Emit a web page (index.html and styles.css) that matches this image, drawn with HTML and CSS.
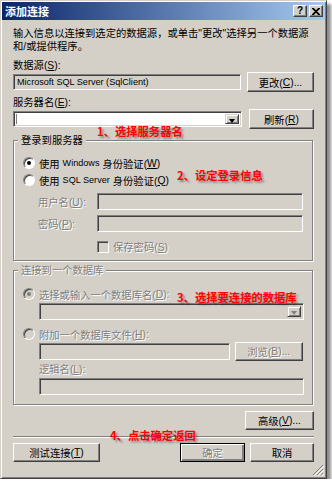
FILE: index.html
```html
<!DOCTYPE html>
<html lang="zh-CN">
<head>
    <meta charset="UTF-8">
    <title>添加连接</title>
    <link rel="stylesheet" href="styles.css">
</head>
<body>
<div class="window">
    <div class="titlebar">
        <span class="title">添加连接</span>
        <div class="caption-btns">
            <span class="cbtn help">?</span>
            <span class="cbtn close">
                <svg width="8" height="7" viewBox="0 0 8 7"><path d="M0 0L7 7M1 0L8 7M7 0L0 7M8 0L1 7" stroke="#000" stroke-width="1.1"/></svg>
            </span>
        </div>
    </div>
    <div class="content">
        <p class="intro">输入信息以连接到选定的数据源，或单击"更改"选择另一个数据源和/或提供程序。</p>
        <div class="label first">数据源(<u>S</u>):</div>
        <div class="row">
            <div class="field readonly src"><span class="en">Microsoft SQL Server (SqlClient)</span></div>
            <div class="btn change">更改(<u>C</u>)...</div>
        </div>
        <div class="label">服务器名(<u>E</u>):</div>
        <div class="row">
            <div class="field combo server"><span class="cursor"></span><span class="drop"></span></div>
            <div class="btn refresh">刷新(<u>R</u>)</div>
        </div>

        <div class="group login">
            <span class="legend">登录到服务器</span>
            <div class="radio-row">
                <span class="radio checked"></span>使用 <span class="en">Windows</span> 身份验证(<u>W</u>)
            </div>
            <div class="radio-row second">
                <span class="radio"></span>使用 <span class="en">SQL Server</span> 身份验证(<u>Q</u>)
            </div>
            <div class="field-row user">
                <span class="row-label disabled">用户名(<u>U</u>):</span>
                <div class="field disabled-box login-box"></div>
            </div>
            <div class="field-row pw">
                <span class="row-label disabled">密码(<u>P</u>):</span>
                <div class="field disabled-box login-box"></div>
            </div>
            <div class="check-row">
                <span class="checkbox"></span><span class="disabled">保存密码(<u>S</u>)</span>
            </div>
        </div>

        <div class="group database">
            <span class="legend disabled">连接到一个数据库</span>
            <div class="radio-row disabled">
                <span class="radio checked off"></span>选择或输入一个数据库名(<u>D</u>):
            </div>
            <div class="field combo disabled-box dbname"><span class="drop off"></span></div>
            <div class="radio-row disabled attach">
                <span class="radio off"></span>附加一个数据库文件(<u>H</u>):
            </div>
            <div class="file-row">
                <div class="field disabled-box file"></div>
                <div class="btn browse disabled">浏览(<u>B</u>)...</div>
            </div>
            <div class="sub-label disabled">逻辑名(<u>L</u>):</div>
            <div class="field disabled-box logical"></div>
        </div>

        <div class="adv-row">
            <div class="btn advanced">高级(<u>V</u>)...</div>
        </div>
        <div class="separator"></div>
        <div class="bottom-row">
            <div class="btn test">测试连接(<u>T</u>)</div>
            <div class="btn default disabled ok">确定</div>
            <div class="btn cancel">取消</div>
        </div>
    </div>

    <svg class="grip" width="12" height="12" viewBox="0 0 12 12">
        <path d="M11 1L1 11M11 5L5 11M11 9L9 11" stroke="#808080" stroke-width="1"/>
        <path d="M12 2L2 12M12 6L6 12M12 10L10 12" stroke="#fff" stroke-width="1"/>
    </svg>

    <span class="note n1">1、选择服务器名</span>
    <span class="note n2">2、设定登录信息</span>
    <span class="note n3">3、选择要连接的数据库</span>
    <span class="note n4">4、点击确定返回</span>
</div>
</body>
</html>
```

FILE: styles.css
```css
html,body{
    margin:0;
    padding:0;
    background:#fff;
}
body{
    font-family:"Liberation Sans","Noto Sans CJK SC",sans-serif;
    font-size:10.3px;
    color:#000;
}
u{
    text-decoration:underline;
    text-underline-offset:1px;
}
.en{
    font-size:9.1px;
}
.window{
    position:relative;
    box-sizing:border-box;
    width:327px;
    height:479px;
    padding:1px;
    background:#d4d0c8;
    border:1px solid;
    border-color:#d4d0c8 #404040 #404040 #d4d0c8;
    box-shadow:inset 1px 1px #fff,inset -1px -1px #808080,4px 4px 3px rgba(0,0,0,.45);
}
.titlebar{
    height:18px;
    display:flex;
    align-items:center;
    justify-content:space-between;
    padding:0 2px 0 3px;
    background:linear-gradient(to right,#0a246a,#a6caf0);
}
.title{
    color:#fff;
    font-weight:bold;
    font-size:11px;
    font-family:"Noto Sans CJK SC",sans-serif;
}
.caption-btns{
    display:flex;
    gap:2px;
}
.cbtn{
    box-sizing:border-box;
    width:14px;
    height:12px;
    display:flex;
    align-items:center;
    justify-content:center;
    background:#d4d0c8;
    border:1px solid;
    border-color:#fff #404040 #404040 #fff;
    box-shadow:inset -1px -1px #808080;
    font-weight:bold;
    font-size:10px;
    line-height:10px;
}
.content{
    padding:0 11px;
}
.intro{
    margin:7px 0 0;
    line-height:13px;
}
.label{
    line-height:12px;
    margin-top:5px;
}
.label.first{
    margin-top:7px;
}
.row{
    display:flex;
    align-items:center;
    justify-content:space-between;
    height:20px;
}

/* sunken boxes */
.field{
    box-sizing:border-box;
    position:relative;
    height:17px;
    background:#fff;
    border:1px solid;
    border-color:#808080 #fff #fff #808080;
    box-shadow:inset 1px 1px #404040,inset -1px -1px #d4d0c8;
}
.readonly,.disabled-box{
    background:#d4d0c8;
}
.src{
    width:228px;
    height:16px;
    padding-left:3px;
    line-height:14px;
    white-space:nowrap;
}
.server{
    width:229px;
    height:16px;
}
.cursor{
    position:absolute;
    left:2px;
    top:2px;
    width:1px;
    height:10px;
    background:#808080;
}
.drop{
    position:absolute;
    right:2px;
    top:2px;
    bottom:2px;
    width:14px;
    box-sizing:border-box;
    background:#d4d0c8;
    border:1px solid;
    border-color:#d4d0c8 #404040 #404040 #d4d0c8;
    box-shadow:inset 1px 1px #fff,inset -1px -1px #808080;
}
.drop::after{
    content:'';
    position:absolute;
    left:3px;
    top:4px;
    border-left:3.5px solid transparent;
    border-right:3.5px solid transparent;
    border-top:4px solid #000;
}
.drop.off::after{
    border-top-color:#808080;
}

/* buttons */
.btn{
    box-sizing:border-box;
    height:20px;
    display:flex;
    align-items:center;
    justify-content:center;
    background:#d4d0c8;
    border:1px solid;
    border-color:#fff #404040 #404040 #fff;
    box-shadow:inset -1px -1px #808080;
    white-space:nowrap;
}
.change{
    width:67px;
}
.refresh{
    width:65px;
}
.disabled{
    color:#808080;
    text-shadow:1px 1px #fff;
}

/* group boxes */
.group{
    position:relative;
    width:300px;
    box-sizing:border-box;
    border:1px solid #808080;
    box-shadow:inset 1px 1px #fff,1px 1px #fff;
    padding:15px 9px 7px;
}
.login{
    margin-top:11px;
}
.database{
    margin-top:9px;
    padding-top:16px;
    padding-bottom:9px;
}
.legend{
    position:absolute;
    left:4px;
    top:-7px;
    padding:0 3px;
    line-height:13px;
    background:#d4d0c8;
}
.radio-row{
    display:flex;
    align-items:center;
    height:14px;
    white-space:nowrap;
}
.radio-row .en{
    margin:0 3px;
}
.radio-row.second{
    margin-top:3px;
}
.radio{
    box-sizing:border-box;
    position:relative;
    width:12px;
    height:12px;
    margin-right:4px;
    border-radius:50%;
    background:#fff;
    border:1px solid;
    border-color:#808080 #fff #fff #808080;
    box-shadow:inset 1px 1px #404040;
}
.radio.off{
    background:#d4d0c8;
}
.radio.checked::after{
    content:'';
    position:absolute;
    left:3px;
    top:3px;
    width:4px;
    height:4px;
    border-radius:50%;
    background:#000;
}
.radio.off.checked::after{
    background:#808080;
}
.field-row{
    display:flex;
    align-items:center;
    padding-left:15px;
}
.field-row.user{
    margin-top:6px;
}
.field-row.pw{
    margin-top:5px;
}
.row-label{
    width:59px;
}
.login-box{
    width:208px;
}
.check-row{
    display:flex;
    align-items:center;
    height:13px;
    margin-top:8px;
    padding-left:74px;
}
.checkbox{
    box-sizing:border-box;
    width:12px;
    height:12px;
    margin-right:4px;
    background:#d4d0c8;
    border:1px solid;
    border-color:#808080 #fff #fff #808080;
    box-shadow:inset 1px 1px #404040;
}
.dbname{
    width:265px;
    margin:2px 0 0 16px;
}
.attach{
    margin-top:7px;
}
.file-row{
    display:flex;
    align-items:center;
    height:19px;
    margin:1px 0 0 16px;
}
.file{
    width:192px;
}
.browse{
    width:69px;
    height:19px;
    margin-left:5px;
}
.sub-label{
    line-height:12px;
    margin:3px 0 0 16px;
}
.logical{
    width:265px;
    margin:2px 0 0 16px;
}

/* bottom */
.adv-row{
    display:flex;
    justify-content:flex-end;
    margin-top:6px;
}
.advanced{
    width:69px;
    height:19px;
}
.separator{
    margin-top:6px;
    border-top:1px solid #808080;
    border-bottom:1px solid #fff;
}
.bottom-row{
    display:flex;
    margin-top:5px;
}
.bottom-row .btn{
    height:19px;
}
.test{
    width:87px;
}
.ok{
    width:65px;
    margin-left:auto;
    border-color:#000;
    box-shadow:inset 1px 1px #fff,inset -2px -2px #808080;
}
.cancel{
    width:64px;
    margin-left:5px;
}
.grip{
    position:absolute;
    right:2px;
    bottom:2px;
}

/* red annotations on top of the dialog */
.note{
    position:absolute;
    color:#f00;
    font-family:"Noto Sans CJK SC",sans-serif;
    font-weight:bold;
    font-size:11.3px;
    line-height:14px;
    white-space:nowrap;
    text-shadow:2px 2px 2px rgba(0,0,0,.35);
}
.n1{ left:96px; top:123px; }
.n2{ left:176px; top:167px; }
.n3{ left:176px; top:289px; }
.n4{ left:109px; top:427px; }
```
